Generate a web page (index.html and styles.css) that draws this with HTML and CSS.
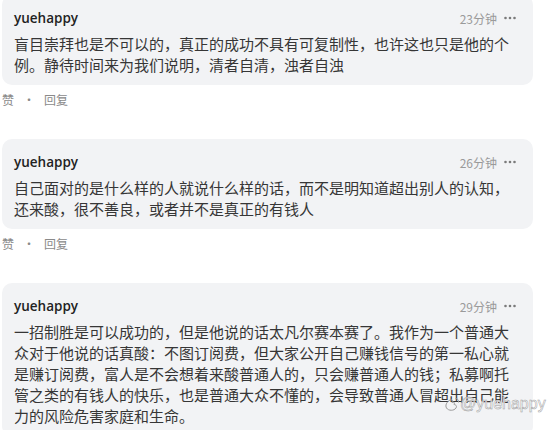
FILE: index.html
```html
<!DOCTYPE html>
<html lang="zh">
<head>
<meta charset="utf-8">
<link rel="stylesheet" href="styles.css">
</head>
<body>
<div class="list">
  <div class="item first">
    <div class="card">
      <div class="head">
        <span class="user">yuehappy</span>
        <span class="meta"><span class="time">23分钟</span><svg class="more" width="12" height="4" viewBox="0 0 12 4"><circle cx="1.5" cy="2" r="1.3"/><circle cx="6" cy="2" r="1.3"/><circle cx="10.5" cy="2" r="1.3"/></svg></span>
      </div>
      <p class="text">盲目崇拜也是不可以的，真正的成功不具有可复制性，也许这也只是他的个例。静待时间来为我们说明，清者自清，浊者自浊</p>
    </div>
    <div class="actions">赞<span class="dot">·</span>回复</div>
  </div>
  <div class="item">
    <div class="card">
      <div class="head">
        <span class="user">yuehappy</span>
        <span class="meta"><span class="time">26分钟</span><svg class="more" width="12" height="4" viewBox="0 0 12 4"><circle cx="1.5" cy="2" r="1.3"/><circle cx="6" cy="2" r="1.3"/><circle cx="10.5" cy="2" r="1.3"/></svg></span>
      </div>
      <p class="text">自己面对的是什么样的人就说什么样的话，而不是明知道超出别人的认知，还来酸，很不善良，或者并不是真正的有钱人</p>
    </div>
    <div class="actions">赞<span class="dot">·</span>回复</div>
  </div>
  <div class="item last">
    <div class="card">
      <div class="head">
        <span class="user">yuehappy</span>
        <span class="meta"><span class="time">29分钟</span><svg class="more" width="12" height="4" viewBox="0 0 12 4"><circle cx="1.5" cy="2" r="1.3"/><circle cx="6" cy="2" r="1.3"/><circle cx="10.5" cy="2" r="1.3"/></svg></span>
      </div>
      <p class="text">一招制胜是可以成功的，但是他说的话太凡尔赛本赛了。我作为一个普通大众对于他说的话真酸：不图订阅费，但大家公开自己赚钱信号的第一私心就是赚订阅费，富人是不会想着来酸普通人的，只会赚普通人的钱；私募啊托管之类的有钱人的快乐，也是普通大众不懂的，会导致普通人冒超出自己能力的风险危害家庭和生命。</p>
    </div>
  </div>
</div>
<div class="watermark">
  <svg class="wm-logo" width="16" height="15" viewBox="0 0 16 15"><path d="M6 3 C2.5 5 1 8.5 2.5 11 C4.5 14 10 14 12 11 C13.5 8.5 11 7.5 10 7.5 C11 5.5 10 4.5 8 5.5 C9 3.5 8 2 6 3 Z" fill="none" stroke="#9a9a9a" stroke-width="1"/><path d="M11.5 1.5 C13.5 1.5 15 3 14.5 5.5" fill="none" stroke="#9a9a9a" stroke-width="1"/></svg>
  <span class="wm-text">@yuehappy</span>
</div>
</body>
</html>
```
FILE: styles.css
```css
html, body {
  margin: 0;
  padding: 0;
  background: #ffffff;
  overflow: hidden;
  height: 430px;
}
body {
  font-family: "Noto Sans CJK SC", "Noto Sans", sans-serif;
  color: #333333;
  position: relative;
}
.list {
  padding-left: 2px;
  width: 531px;
}
.item {
  margin-bottom: 30px;
}
.item.first {
  margin-top: -5px;
}
.item.last {
  margin-bottom: 0;
}
.card {
  background: #f2f3f5;
  border-radius: 10px;
  padding: 12px 17px 10px 12px;
}
.head {
  display: flex;
  justify-content: space-between;
  align-items: center;
  height: 22px;
}
.user {
  font-family: "Open Sans", "Noto Sans", sans-serif;
  font-weight: 600;
  font-size: 13.5px;
  color: #222222;
}
.meta {
  display: flex;
  align-items: center;
  gap: 7px;
  color: #9a9a9a;
  font-size: 12px;
}
.more {
  fill: #7a7a7a;
}
.text {
  margin: 4px 0 0;
  font-size: 15px;
  line-height: 21px;
  color: #363636;
}
.actions {
  margin-top: 6px;
  font-size: 12px;
  line-height: 18px;
  color: #8a8a8a;
}
.dot {
  margin: 0 9px;
}
.watermark {
  position: absolute;
  left: 444px;
  top: 395px;
  display: flex;
  align-items: center;
  gap: 0;
}
.wm-text {
  font-family: "Liberation Sans", sans-serif;
  font-size: 16px;
  color: rgba(255, 255, 255, 0.85);
  -webkit-text-stroke: 0.5px #a0a0a0;
}
```
